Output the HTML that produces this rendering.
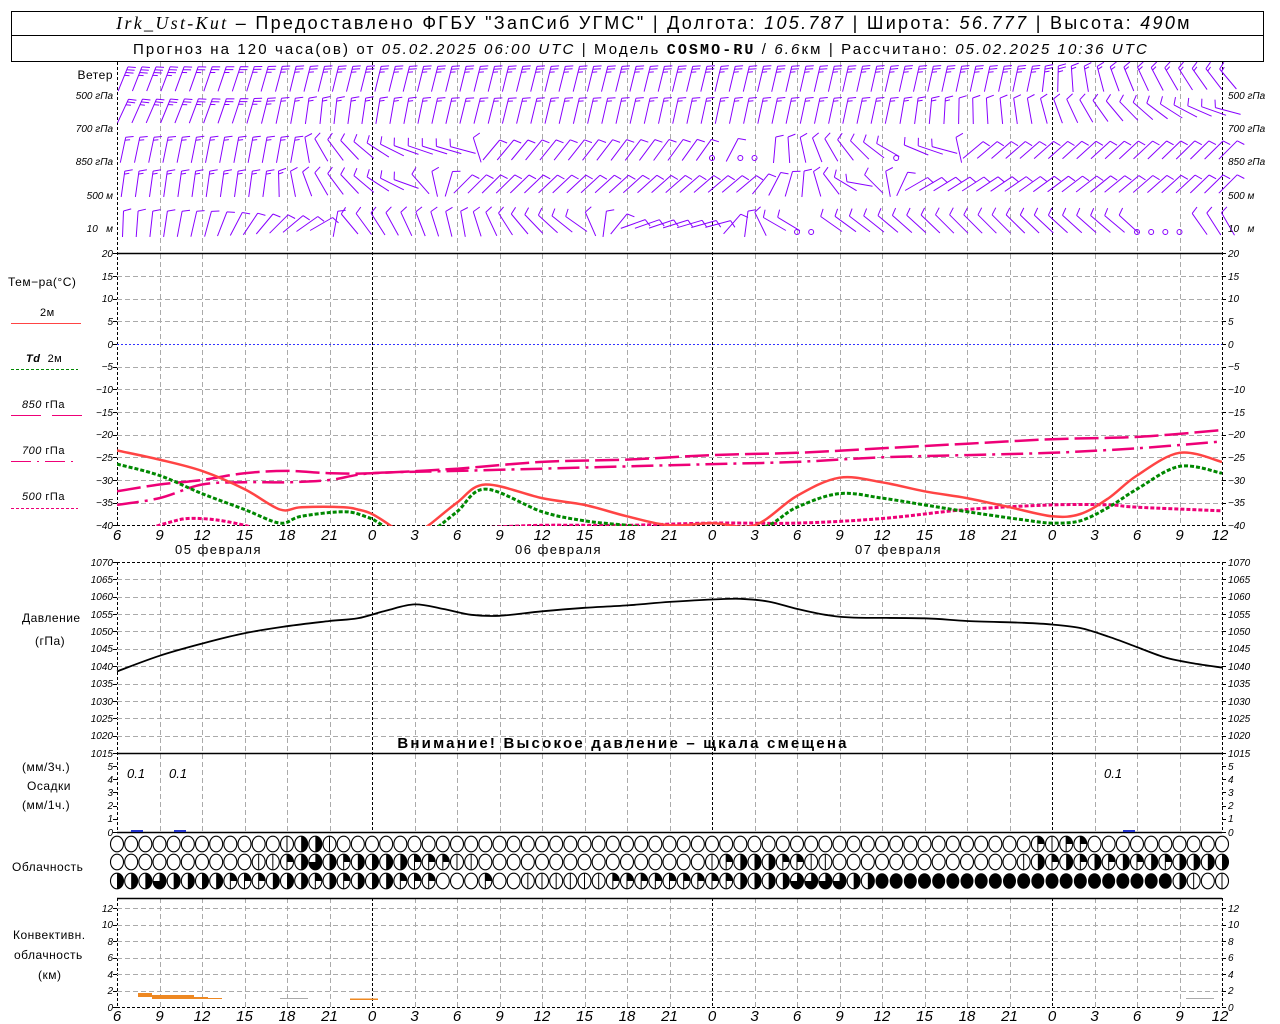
<!DOCTYPE html>
<html><head><meta charset="utf-8"><style>
html,body{margin:0;padding:0;background:#fff;width:1280px;height:1024px;overflow:hidden}
svg{display:block}
text{font-family:"Liberation Sans","DejaVu Sans",sans-serif;fill:#000}
.t{font-size:10px;font-style:italic}
.ax{font-size:15px;font-style:italic}
.lb{font-size:12px;letter-spacing:0.5px}
</style></head><body>
<svg id="g" width="1280" height="1024" viewBox="0 0 1280 1024" xmlns="http://www.w3.org/2000/svg">
<defs><clipPath id="tc"><rect x="117" y="253" width="1105" height="273"/></clipPath></defs>
<g id="dyn"></g>
<!-- header -->
<rect x="11.5" y="11.5" width="1252" height="50" fill="none" stroke="#000"/>
<line x1="11" y1="35.5" x2="1264" y2="35.5" stroke="#000"/>
<text x="654" y="29" text-anchor="middle" style="font-size:18px;letter-spacing:2.3px"><tspan style="font-family:'Liberation Serif',serif;font-style:italic">Irk_Ust-Kut</tspan> – Предоставлено ФГБУ "ЗапСиб УГМС" | Долгота: <tspan font-style="italic">105.787</tspan> | Широта: <tspan font-style="italic">56.777</tspan> | Высота: <tspan font-style="italic">490</tspan>м</text>
<text x="641" y="54" text-anchor="middle" style="font-size:15px;letter-spacing:2.1px">Прогноз на 120 часа(ов) от <tspan font-style="italic">05.02.2025 06:00 UTC</tspan> | Модель <tspan font-weight="bold" style="font-family:'Liberation Mono',monospace">COSMO-RU</tspan> / <tspan font-style="italic">6.6</tspan>км | Рассчитано: <tspan font-style="italic">05.02.2025 10:36 UTC</tspan></text>
<!-- wind labels -->
<text x="113" y="79" text-anchor="end" class="lb">Ветер</text>
<g class="t" style="font-size:10px">
<text x="113" y="99" text-anchor="end">500 гПа</text>
<text x="113" y="132" text-anchor="end">700 гПа</text>
<text x="113" y="165" text-anchor="end">850 гПа</text>
<text x="113" y="199" text-anchor="end">500 м</text>
<text x="113" y="232" text-anchor="end">10 &#160; м</text>
<text x="1228" y="99">500 гПа</text>
<text x="1228" y="132">700 гПа</text>
<text x="1228" y="165">850 гПа</text>
<text x="1228" y="199">500 м</text>
<text x="1228" y="232">10 &#160; м</text>
</g>
<!-- temp legend -->
<text x="8" y="286" class="lb">Тем−ра(°С)</text>
<text x="40" y="316" class="lb" style="font-size:11px">2м</text>
<line x1="11" y1="323.5" x2="81" y2="323.5" stroke="#f44"/>
<text x="26" y="362" class="lb" style="font-size:11px"><tspan font-style="italic" font-weight="bold">Td</tspan> &#160;2м</text>
<line x1="11" y1="369.5" x2="78" y2="369.5" stroke="#080" stroke-dasharray="3,2"/>
<text x="22" y="408" class="lb" style="font-size:11px"><tspan font-style="italic">850</tspan> гПа</text>
<line x1="11" y1="415.5" x2="41" y2="415.5" stroke="#e07"/><line x1="52" y1="415.5" x2="82" y2="415.5" stroke="#e07"/>
<text x="22" y="454" class="lb" style="font-size:11px"><tspan font-style="italic">700</tspan> гПа</text>
<line x1="11" y1="461.5" x2="78" y2="461.5" stroke="#e07" stroke-dasharray="20,6,2,6"/>
<text x="22" y="500" class="lb" style="font-size:11px"><tspan font-style="italic">500</tspan> гПа</text>
<line x1="11" y1="508.5" x2="78" y2="508.5" stroke="#e07" stroke-dasharray="3,2"/>
<!-- temp ticks -->
<g class="t" text-anchor="end">
<text x="113" y="257">20</text><text x="113" y="280">15</text><text x="113" y="302">10</text><text x="113" y="325">5</text><text x="113" y="348">0</text><text x="113" y="370">−5</text><text x="113" y="393">−10</text><text x="113" y="416">−15</text><text x="113" y="438">−20</text><text x="113" y="461">−25</text><text x="113" y="484">−30</text><text x="113" y="506">−35</text><text x="113" y="529">−40</text>
</g>
<g class="t">
<text x="1228" y="257">20</text><text x="1228" y="280">15</text><text x="1228" y="302">10</text><text x="1228" y="325">5</text><text x="1228" y="348">0</text><text x="1228" y="370">−5</text><text x="1228" y="393">−10</text><text x="1228" y="416">−15</text><text x="1228" y="438">−20</text><text x="1228" y="461">−25</text><text x="1228" y="484">−30</text><text x="1228" y="506">−35</text><text x="1228" y="529">−40</text>
</g>
<!-- hour axis -->
<g class="ax" text-anchor="middle">
<text x="117" y="540">6</text><text x="159.5" y="540">9</text><text x="202" y="540">12</text><text x="244.5" y="540">15</text><text x="287" y="540">18</text><text x="329.5" y="540">21</text><text x="372" y="540">0</text><text x="414.5" y="540">3</text><text x="457" y="540">6</text><text x="499.5" y="540">9</text><text x="542" y="540">12</text><text x="584.5" y="540">15</text><text x="627" y="540">18</text><text x="669.5" y="540">21</text><text x="712" y="540">0</text><text x="754.5" y="540">3</text><text x="797" y="540">6</text><text x="839.5" y="540">9</text><text x="882" y="540">12</text><text x="924.5" y="540">15</text><text x="967" y="540">18</text><text x="1009.5" y="540">21</text><text x="1052" y="540">0</text><text x="1094.5" y="540">3</text><text x="1137" y="540">6</text><text x="1179.5" y="540">9</text><text x="1220" y="540">12</text>
</g>
<g class="ax" text-anchor="middle">
<text x="117" y="1021">6</text><text x="159.5" y="1021">9</text><text x="202" y="1021">12</text><text x="244.5" y="1021">15</text><text x="287" y="1021">18</text><text x="329.5" y="1021">21</text><text x="372" y="1021">0</text><text x="414.5" y="1021">3</text><text x="457" y="1021">6</text><text x="499.5" y="1021">9</text><text x="542" y="1021">12</text><text x="584.5" y="1021">15</text><text x="627" y="1021">18</text><text x="669.5" y="1021">21</text><text x="712" y="1021">0</text><text x="754.5" y="1021">3</text><text x="797" y="1021">6</text><text x="839.5" y="1021">9</text><text x="882" y="1021">12</text><text x="924.5" y="1021">15</text><text x="967" y="1021">18</text><text x="1009.5" y="1021">21</text><text x="1052" y="1021">0</text><text x="1094.5" y="1021">3</text><text x="1137" y="1021">6</text><text x="1179.5" y="1021">9</text><text x="1220" y="1021">12</text>
</g>
<g style="font-size:13px;letter-spacing:1.5px">
<text x="175" y="554">05 февраля</text><text x="515" y="554">06 февраля</text><text x="855" y="554">07 февраля</text>
</g>
<!-- pressure -->
<text x="22" y="622" class="lb">Давление</text>
<text x="35" y="645" class="lb">(гПа)</text>
<g class="t" text-anchor="end">
<text x="113" y="566">1070</text><text x="113" y="583">1065</text><text x="113" y="600">1060</text><text x="113" y="618">1055</text><text x="113" y="635">1050</text><text x="113" y="652">1045</text><text x="113" y="670">1040</text><text x="113" y="687">1035</text><text x="113" y="705">1030</text><text x="113" y="722">1025</text><text x="113" y="739">1020</text><text x="113" y="757">1015</text>
</g>
<g class="t">
<text x="1228" y="566">1070</text><text x="1228" y="583">1065</text><text x="1228" y="600">1060</text><text x="1228" y="618">1055</text><text x="1228" y="635">1050</text><text x="1228" y="652">1045</text><text x="1228" y="670">1040</text><text x="1228" y="687">1035</text><text x="1228" y="705">1030</text><text x="1228" y="722">1025</text><text x="1228" y="739">1020</text><text x="1228" y="757">1015</text>
</g>
<text x="623" y="748" text-anchor="middle" style="font-size:15px;font-weight:bold;letter-spacing:2.2px">Внимание! Высокое давление – щкала смещена</text>
<!-- precip -->
<text x="22" y="771" class="lb">(мм/3ч.)</text>
<text x="27" y="790" class="lb">Осадки</text>
<text x="22" y="809" class="lb">(мм/1ч.)</text>
<g class="t" text-anchor="end">
<text x="113" y="770">5</text><text x="113" y="783">4</text><text x="113" y="796">3</text><text x="113" y="809">2</text><text x="113" y="822">1</text><text x="113" y="836">0</text>
</g>
<g class="t">
<text x="1228" y="770">5</text><text x="1228" y="783">4</text><text x="1228" y="796">3</text><text x="1228" y="809">2</text><text x="1228" y="822">1</text><text x="1228" y="836">0</text>
</g>
<g style="font-size:13px;font-style:italic">
<text x="127" y="778">0.1</text><text x="169" y="778">0.1</text><text x="1104" y="778">0.1</text>
</g>
<text x="12" y="871" class="lb">Облачность</text>
<!-- convective -->
<text x="13" y="939" class="lb">Конвективн.</text>
<text x="14" y="959" class="lb">облачность</text>
<text x="38" y="979" class="lb">(км)</text>
<g class="t" text-anchor="end">
<text x="113" y="912">12</text><text x="113" y="928">10</text><text x="113" y="945">8</text><text x="113" y="961">6</text><text x="113" y="978">4</text><text x="113" y="994">2</text><text x="113" y="1011">0</text>
</g>
<g class="t">
<text x="1228" y="912">12</text><text x="1228" y="928">10</text><text x="1228" y="945">8</text><text x="1228" y="961">6</text><text x="1228" y="978">4</text><text x="1228" y="994">2</text><text x="1228" y="1011">0</text>
</g>
</svg>
<script>
(function(){
var X=function(h){return 117+(h-6)*340/24;};
var s='';
function L(x1,y1,x2,y2,c,w,da){s+='<line x1="'+x1+'" y1="'+y1+'" x2="'+x2+'" y2="'+y2+'" stroke="'+c+'" stroke-width="'+(w||1)+'"'+(da?' stroke-dasharray="'+da+'"':'')+'/>';}
var segs=[[62,525],[562,832],[898,1007]];
for(var h=6;h<=84;h+=3){var x=Math.round(X(h))+.5;var mid=(h%24==0)||h==6||h==84;
 for(var i=0;i<3;i++)L(x,segs[i][0],x,segs[i][1],mid?'#000':'#aaa',1,mid?'3,2':'5,3');}
for(var v=15;v>=-35;v-=5){var y=Math.round(344-v*4.533)+.5; if(v==0)L(117,y,1222,y,'#33f',1,'2,2'); else L(117,y,1222,y,'#aaa',1,'5,3');}
L(117,253.5,1222,253.5,'#000',1.5);
L(117,525.5,1222,525.5,'#000',1,'3,2');
for(var v=20;v>=-40;v-=5){var y=Math.round(344-v*4.533)+.5;L(113,y,117,y,'#000');L(1222,y,1226,y,'#000');}
for(var P=1065;P>1015;P-=5){var y=Math.round(562+(1070-P)*3.4727)+.5;L(117,y,1222,y,'#aaa',1,'5,3');}
for(var P=1070;P>=1015;P-=5){var y=Math.round(562+(1070-P)*3.4727)+.5;L(113,y,117,y,'#000');L(1222,y,1226,y,'#000');}
L(117,562.5,1222,562.5,'#000',1,'3,2');
L(117,753.5,1222,753.5,'#000',1.5);
for(var k=0;k<=5;k++){var y=Math.round(832-k*13.2)+.5;L(113,y,117,y,'#000');L(1222,y,1226,y,'#000');}
L(117,832.5,1222,832.5,'#000',1.5);
for(var k=1;k<=6;k++){var y=Math.round(1007-k*16.5)+.5;L(117,y,1222,y,'#aaa',1,'5,3');}
for(var k=0;k<=6;k++){var y=Math.round(1007-k*16.5)+.5;L(113,y,117,y,'#000');L(1222,y,1226,y,'#000');}
L(117,898.5,1222,898.5,'#000',1.5);
L(117,1007.5,1222,1007.5,'#000',1,'3,2');
function TY(t){return 344-t*4.533;}
function PY(p){return 562+(1070-p)*3.4727;}
function path(pts,fy){
 var P=pts.map(function(p){return [X(p[0]),fy(p[1])];});
 var d='M'+P[0][0].toFixed(1)+' '+P[0][1].toFixed(1);
 for(var i=0;i<P.length-1;i++){var p0=P[i-1]||P[i],p1=P[i],p2=P[i+1],p3=P[i+2]||p2;
  var c1x=p1[0]+(p2[0]-p0[0])/6,c1y=p1[1]+(p2[1]-p0[1])/6,c2x=p2[0]-(p3[0]-p1[0])/6,c2y=p2[1]-(p3[1]-p1[1])/6;
  d+=' C'+c1x.toFixed(1)+' '+c1y.toFixed(1)+' '+c2x.toFixed(1)+' '+c2y.toFixed(1)+' '+p2[0].toFixed(1)+' '+p2[1].toFixed(1);}
 return d;}
function C(pts,fy,col,w,da,clip){s+='<path d="'+path(pts,fy)+'" fill="none" stroke="'+col+'" stroke-width="'+w+'"'+(da?' stroke-dasharray="'+da+'"':'')+(clip?' clip-path="url(#tc)"':'')+'/>';}
C([[6,-35.5],[9,-34],[12,-31],[15,-30.5],[18,-30.5],[21,-30],[24,-28.5],[30,-28],[36,-27.5],[42,-27],[48,-26.5],[54,-26],[60,-25],[66,-24.5],[72,-24],[78,-23],[84,-21.5]],TY,'#e07',2.5,'22,6,3,6',1);
C([[6,-32.5],[9,-31],[12,-30],[15,-28.5],[18,-28],[21,-28.5],[24,-28.5],[30,-27.5],[36,-26],[42,-25.5],[48,-24.5],[54,-24],[60,-23],[66,-22],[72,-21],[78,-20.5],[84,-19]],TY,'#e07',2.5,'24,6',1);
C([[8,-41],[9.5,-39.5],[11,-38.5],[13,-38.8],[15,-40],[16,-41]],TY,'#e07',3,'4,2',1);
C([[32,-40.5],[36,-40],[42,-40],[48,-39.5],[54,-39.5],[60,-38.5],[66,-36.5],[72,-35.5],[76,-35.5],[78,-36],[84,-36.8]],TY,'#e07',3,'4,2',1);
C([[6,-23.5],[9,-25.5],[12,-28],[15,-32],[17.5,-36.5],[19,-36],[22,-36],[23,-36.5],[24,-37.5],[25.5,-40.5],[26,-42]],TY,'#f44',2.5,null,1);
C([[27,-42],[28,-40],[30,-35],[32,-31],[36,-34],[39,-35.5],[42,-38],[45,-40],[48,-39.5],[51,-40],[54,-33.5],[57,-29.5],[60,-30.5],[63,-32.5],[66,-34],[69,-36],[72,-38],[74,-37.5],[76,-34],[78,-29],[81,-24],[84,-26]],TY,'#f44',2.5,null,1);
C([[6,-26.5],[9,-29],[12,-33],[15,-36.5],[17.5,-39.5],[19,-38],[22,-37],[23.5,-38],[24.5,-39.5],[25.5,-42]],TY,'#080',3,'4,2',1);
C([[28,-42],[30,-37],[32,-32],[36,-37],[39,-39],[42,-40],[45,-41],[51,-41],[54,-36],[57,-33],[60,-34],[63,-35.5],[66,-37],[70,-38.8],[72,-39.5],[74,-39],[76,-36],[78,-32],[81,-27],[84,-28.5]],TY,'#080',3,'4,2',1);
C([[6,1038.5],[9,1043],[12,1046.5],[15,1049.5],[18,1051.5],[21,1053],[23,1053.8],[25,1056],[27,1057.8],[29,1056.5],[31,1054.8],[33,1054.5],[36,1055.8],[39,1056.8],[42,1057.5],[45,1058.5],[48,1059.2],[50,1059.4],[52,1058.6],[54,1056.5],[56,1054.8],[58,1054],[63,1053.8],[66,1053],[70,1052.5],[72,1052],[74,1051],[76,1048.5],[78,1045.5],[80,1042.5],[82,1040.8],[84,1039.6]],PY,'#000',1.8);
s+='<rect x="131" y="830" width="12" height="2" fill="#23c"/><rect x="174" y="830" width="12" height="2" fill="#23c"/><rect x="1123" y="830" width="12" height="2" fill="#23c"/>';
s+='<rect x="138" y="993" width="14" height="4" fill="#e82"/><rect x="152" y="995" width="42" height="4" fill="#e82"/><rect x="194" y="997" width="14" height="2" fill="#e82"/><rect x="208" y="998" width="14" height="1" fill="#e82"/><rect x="280" y="998" width="28" height="1" fill="#aaa"/><rect x="350" y="998.5" width="28" height="1.5" fill="#e82"/><rect x="1186" y="998" width="28" height="1" fill="#aaa"/>';
function interp(kf,h){for(var i=0;i<kf.length-1;i++){if(h>=kf[i][0]&&h<=kf[i+1][0]){var t=(h-kf[i][0])/(kf[i+1][0]-kf[i][0]);return [kf[i][1]+(kf[i+1][1]-kf[i][1])*t, t<0.5?kf[i][2]:kf[i+1][2]];}}return [kf[kf.length-1][1],kf[kf.length-1][2]];}
function barb(x,yc,ang,n,len){var a=ang*Math.PI/180,L=len||26;var ux=Math.sin(a),uy=-Math.cos(a);
 var bx=x-ux*L/2,by=yc-uy*L/2,tx=x+ux*L/2,ty=yc+uy*L/2;
 var d='M'+bx.toFixed(1)+' '+by.toFixed(1)+'L'+tx.toFixed(1)+' '+ty.toFixed(1);
 var px=-uy,py=ux;
 for(var i=0;i<n;i++){var sx=tx-ux*i*3,sy=ty-uy*i*3;var fl=i==n-1&&n>1?5:8;
  d+='M'+sx.toFixed(1)+' '+sy.toFixed(1)+'l'+((px*0.95+ux*0.3)*fl).toFixed(1)+' '+((py*0.95+uy*0.3)*fl).toFixed(1);}
 s+='<path d="'+d+'" stroke="#80f" stroke-width="1" fill="none"/>';}
var rows=[
 [79,[[6,22,4],[14,18,3],[18,14,3],[40,14,3],[70,12,3],[76,-20,2],[84,-40,2]]],
 [111,[[6,25,3],[14,18,3],[20,6,2],[30,14,2],[48,12,2],[60,12,2],[70,-10,1],[76,-40,1],[84,-75,1]]],
 [150,[[6,12,2],[18,10,2],[20,-30,1],[26,-70,1],[30,-75,1],[32,40,1],[48,35,1],[52,5,1],[56,-30,1],[60,-60,1],[64,-75,1],[66,50,1],[84,45,1]]],
 [184,[[6,8,2],[16,8,2],[20,-30,1],[26,-70,1],[30,45,1],[50,50,1],[54,5,1],[58,-80,1],[62,60,1],[84,45,1]]],
 [224,[[6,2,1],[12,15,1],[16,40,1],[20,60,1],[22,-40,1],[30,-10,1],[34,-40,1],[38,-55,1],[42,70,1],[48,75,1],[52,-60,1],[60,-50,1],[64,-45,1],[68,-45,1],[76,-50,1],[84,-30,1]]]
];
var calm={150:[48,50,51,61],224:[54,55,78,79,80,81]};
rows.forEach(function(r){var yc=r[0];for(var h=6;h<=84;h++){
 if(calm[yc]&&calm[yc].indexOf(h)>=0){s+='<circle cx="'+X(h)+'" cy="'+(yc+8)+'" r="2.5" fill="none" stroke="#80f"/>';continue;}
 var v=interp(r[1],h);barb(X(h)+6,yc,v[0],v[1]);}});
function seq(){var o='';for(var i=0;i<arguments.length;i+=2)o+=new Array(arguments[i+1]+1).join(arguments[i]);return o;}
var r1=seq('o',12,'|',1,'h',2,'|',1,'o',49,'q',1,'|',1,'q',2,'o',10);
var r2=seq('o',10,'|',2,'q',1,'h',1,'t',1,'h',1,'q',1,'h',4,'q',3,'|',2,'o',16,'|',1,'q',1,'h',3,'q',2,'|',2,'o',13,'|',1,'hqhqhqhqhqhhhh',1);
var r3=seq('h',3,'t',1,'h',4,'q',3,'h',3,'q',1,'h',1,'q',1,'h',3,'q',3,'o',3,'q',1,'o',2,'|',6,'q',9,'h',4,'t',4,'h',2,'f',21,'h',1,'|',1,'o',1,'|',1);
[[844,r1],[862,r2],[881,r3]].forEach(function(r){var cy=r[0];for(var i=0;i<79;i++){var cx=X(6+i),c=r[1][i]||'o',rx=6.5,ry=7.8;
 if(c=='f'){s+='<ellipse cx="'+cx+'" cy="'+cy+'" rx="'+rx+'" ry="'+ry+'" fill="#000"/>';continue;}
 s+='<ellipse cx="'+cx+'" cy="'+cy+'" rx="'+rx+'" ry="'+ry+'" fill="#fff" stroke="#000" stroke-width="1.1"/>';
 if(c=='|'){L(cx,cy-ry,cx,cy+ry,'#000',1);}
 if(c=='h')s+='<path d="M'+cx+' '+(cy-ry)+'A'+rx+' '+ry+' 0 0 1 '+cx+' '+(cy+ry)+'Z" fill="#000"/>';
 if(c=='q'){s+='<path d="M'+cx+' '+cy+'L'+cx+' '+(cy-ry)+'A'+rx+' '+ry+' 0 0 1 '+(cx+rx)+' '+cy+'Z" fill="#000"/>';L(cx,cy-ry,cx,cy+ry,'#000',1);}
 if(c=='t')s+='<path d="M'+cx+' '+cy+'L'+cx+' '+(cy-ry)+'A'+rx+' '+ry+' 0 1 1 '+(cx-rx)+' '+cy+'Z" fill="#000"/>';
}});
document.getElementById('dyn').innerHTML=s;
})();
</script>
</body></html>
